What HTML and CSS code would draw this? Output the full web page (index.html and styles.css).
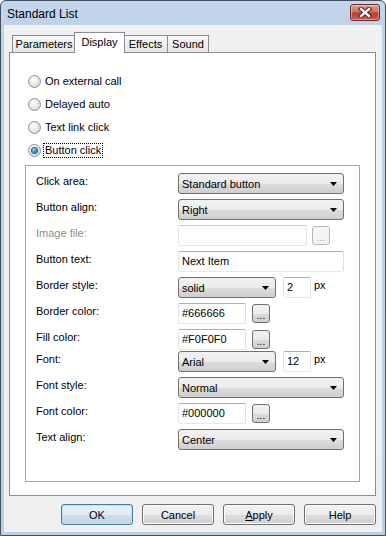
FILE: index.html
```html
<!DOCTYPE html>
<html lang="en">
<head>
    <meta charset="UTF-8">
    <title>Standard List</title>
    <link rel="stylesheet" href="styles.css">
</head>
<body>

<div class="window">
    <div class="titlebar">
        <span class="title">Standard List</span>
        <div class="close-btn">
            <svg width="14" height="11" viewBox="0 0 14 11">
                <path d="M3 2L11 9M11 2L3 9" stroke="#4a1e1e" stroke-width="4.4" stroke-linecap="square"/>
                <path d="M3 2L11 9M11 2L3 9" stroke="#fff" stroke-width="2.4" stroke-linecap="square"/>
            </svg>
        </div>
    </div>

    <div class="client">
        <div class="tabs">
            <div class="tab tab-params">Parameters</div>
            <div class="tab tab-display active">Display</div>
            <div class="tab tab-effects">Effects</div>
            <div class="tab tab-sound">Sound</div>
        </div>

        <div class="panel">
            <div class="radios">
                <div class="radio-row"><span class="radio"></span><span class="radio-text">On external call</span></div>
                <div class="radio-row"><span class="radio"></span><span class="radio-text">Delayed auto</span></div>
                <div class="radio-row"><span class="radio"></span><span class="radio-text">Text link click</span></div>
                <div class="radio-row"><span class="radio checked"></span><span class="radio-text focus">Button click</span></div>
            </div>

            <div class="group">
                <div class="row">
                    <span class="label">Click area:</span>
                    <div class="combo w-full"><span>Standard button</span><svg width="7" height="4"><path d="M0 0h7L3.5 4z"/></svg></div>
                </div>
                <div class="row">
                    <span class="label">Button align:</span>
                    <div class="combo w-full"><span>Right</span><svg width="7" height="4"><path d="M0 0h7L3.5 4z"/></svg></div>
                </div>
                <div class="row">
                    <span class="label disabled">Image file:</span>
                    <div class="field w-image disabled"></div>
                    <div class="dots disabled">...</div>
                </div>
                <div class="row">
                    <span class="label">Button text:</span>
                    <div class="field w-full">Next Item</div>
                </div>
                <div class="row">
                    <span class="label">Border style:</span>
                    <div class="combo w-style"><span>solid</span><svg width="7" height="4"><path d="M0 0h7L3.5 4z"/></svg></div>
                    <div class="field w-num">2</div>
                    <span class="unit">px</span>
                </div>
                <div class="row">
                    <span class="label">Border color:</span>
                    <div class="field w-color">#666666</div>
                    <div class="dots">...</div>
                </div>
                <div class="row">
                    <span class="label">Fill color:</span>
                    <div class="field w-color">#F0F0F0</div>
                    <div class="dots">...</div>
                </div>
                <div class="row font-row">
                    <span class="label">Font:</span>
                    <div class="combo w-style"><span>Arial</span><svg width="7" height="4"><path d="M0 0h7L3.5 4z"/></svg></div>
                    <div class="field w-num">12</div>
                    <span class="unit">px</span>
                </div>
                <div class="row">
                    <span class="label">Font style:</span>
                    <div class="combo w-full"><span>Normal</span><svg width="7" height="4"><path d="M0 0h7L3.5 4z"/></svg></div>
                </div>
                <div class="row">
                    <span class="label">Font color:</span>
                    <div class="field w-color">#000000</div>
                    <div class="dots">...</div>
                </div>
                <div class="row">
                    <span class="label">Text align:</span>
                    <div class="combo w-full"><span>Center</span><svg width="7" height="4"><path d="M0 0h7L3.5 4z"/></svg></div>
                </div>
            </div>
        </div>

        <div class="buttons">
            <button class="default">OK</button>
            <button>Cancel</button>
            <button><u>A</u>pply</button>
            <button>Help</button>
        </div>
    </div>
</div>

</body>
</html>
```

FILE: styles.css
```css
body {
    margin: 0;
    font-family: "Liberation Sans", Arial, sans-serif;
    font-size: 11px;
    color: #000;
    background: #fff;
}
.window {
    width: 386px;
    height: 536px;
    box-sizing: border-box;
    border: 1px solid #45505f;
    border-radius: 6px 6px 0 0;
    background: linear-gradient(#c4d7ef, #bed2ea 24px, #bccfe8);
    padding: 0 3px 3px 3px;
    display: flex;
    flex-direction: column;
}
.titlebar {
    height: 24px;
    display: flex;
    justify-content: space-between;
    align-items: flex-start;
    padding-left: 3px;
}
.title {
    font-size: 12px;
    line-height: 14px;
    padding-top: 6px;
}
.close-btn {
    width: 30px;
    height: 17px;
    box-sizing: border-box;
    margin-top: 3px;
    margin-right: 2px;
    border: 1px solid #6a2b2b;
    border-radius: 3px;
    background: linear-gradient(#e3a08f, #cf6f5d 45%, #b9402f 55%, #c9604c);
    box-shadow: inset 0 0 0 1px rgba(255,255,255,0.35);
    display: flex;
    align-items: center;
    justify-content: center;
}
.client {
    flex: 1;
    background: #f0f0f0;
    padding: 7px 6px 0 5px;
    display: flex;
    flex-direction: column;
}

/* tabs */
.tabs {
    display: flex;
    align-items: flex-end;
    height: 20px;
    padding-left: 3px;
}
.tab {
    height: 17px;
    box-sizing: border-box;
    border: 1px solid #898c95;
    border-bottom: none;
    background: linear-gradient(#f7f7f7, #e6e6e6);
    text-align: center;
    line-height: 16px;
}
.tab-params { width: 64px; }
.tab-display { width: 51px; margin: 0 -2px; }
.tab-effects { width: 45px; }
.tab-sound { width: 42px; margin-left: -1px; }
.tab.active {
    height: 21px;
    margin-bottom: -1px;
    background: #fff;
    line-height: 19px;
    position: relative;
    z-index: 1;
}

.panel {
    height: 444px;
    box-sizing: border-box;
    border: 1px solid #898c95;
    background: #fff;
    padding: 17px 15px 0 15px;
}

/* radio list */
.radios {
    padding-left: 3px;
}
.radio-row {
    height: 23px;
    display: flex;
    align-items: center;
}
.radio {
    width: 13px;
    height: 13px;
    box-sizing: border-box;
    border-radius: 50%;
    border: 1px solid #8e9194;
    background: radial-gradient(circle at 40% 35%, #ffffff, #e9e9e9 45%, #c9c9c9);
    display: flex;
    align-items: center;
    justify-content: center;
    margin-right: 2px;
}
.radio.checked::after {
    content: "";
    width: 5px;
    height: 5px;
    border-radius: 50%;
    background: radial-gradient(circle at 40% 35%, #9fe0ff, #2f8ccc 50%, #124e7c);
    box-shadow: 0 0 0 1px #2a5b80;
}
.radio-text {
    border: 1px dotted transparent;
    padding: 0 1px;
    line-height: 13px;
}
.radio-text.focus {
    border-color: #000;
}

/* settings group */
.group {
    margin-top: 3px;
    height: 317px;
    box-sizing: border-box;
    border: 1px solid #a5a5a5;
    padding: 7px 0 0 10px;
}
.row {
    display: flex;
    align-items: center;
    height: 21px;
    margin-bottom: 5px;
}
.row.font-row {
    margin-top: -4px;
}
.label {
    width: 142px;
    flex: none;
    align-self: flex-start;
    padding-top: 2px;
    line-height: 13px;
}
.label.disabled {
    color: #8d8d8d;
}
.combo {
    height: 21px;
    box-sizing: border-box;
    border: 1px solid #707070;
    border-radius: 3px;
    background: linear-gradient(#f2f2f2, #ebebeb 50%, #dddddd 51%, #cfcfcf);
    padding: 0 6px 0 3px;
    display: flex;
    align-items: center;
    justify-content: space-between;
}
.field {
    height: 21px;
    box-sizing: border-box;
    border: 1px solid;
    border-color: #abadb3 #dbdfe6 #e3e9ef #e2e3ea;
    border-radius: 2px;
    background: #fff;
    padding-left: 3px;
    line-height: 19px;
}
.field.disabled {
    border-color: #c9cbcf #e1e3e6 #e6e8eb #e3e5e8;
}
.w-full { width: 166px; }
.w-image { width: 129px; }
.w-style { width: 98px; }
.w-num { width: 28px; margin-left: 7px; }
.w-color { width: 68px; }
.dots {
    width: 18px;
    height: 19px;
    box-sizing: border-box;
    margin-left: 6px;
    border: 1px solid #707070;
    border-radius: 3px;
    background: linear-gradient(#f2f2f2, #ebebeb 50%, #dddddd 51%, #cfcfcf);
    text-align: center;
    line-height: 22px;
    font-size: 10px;
}
.dots.disabled {
    margin-left: 5px;
    border-color: #b5b8bb;
    background: #f4f4f4;
    color: #9a9a9a;
}
.unit {
    align-self: flex-start;
    padding-top: 2px;
    margin-left: 3px;
    line-height: 13px;
}

/* dialog buttons */
.buttons {
    display: flex;
    justify-content: flex-end;
    gap: 9px;
    padding-top: 8px;
}
.buttons button {
    width: 72px;
    height: 21px;
    padding: 0;
    font-family: "Liberation Sans", Arial, sans-serif;
    font-size: 11px;
    color: #000;
    border: 1px solid #707070;
    border-radius: 3px;
    background: linear-gradient(#f2f2f2, #ebebeb 50%, #dddddd 51%, #cfcfcf);
    box-shadow: inset 0 0 0 1px #fbfbfb;
}
.buttons button.default {
    border-color: #3c7fb1;
    background: linear-gradient(#eaf2f8, #dfeaf2 50%, #d0e0eb 51%, #c3d6e4);
    box-shadow: inset 0 0 0 1px #b8e1f7;
}
```
